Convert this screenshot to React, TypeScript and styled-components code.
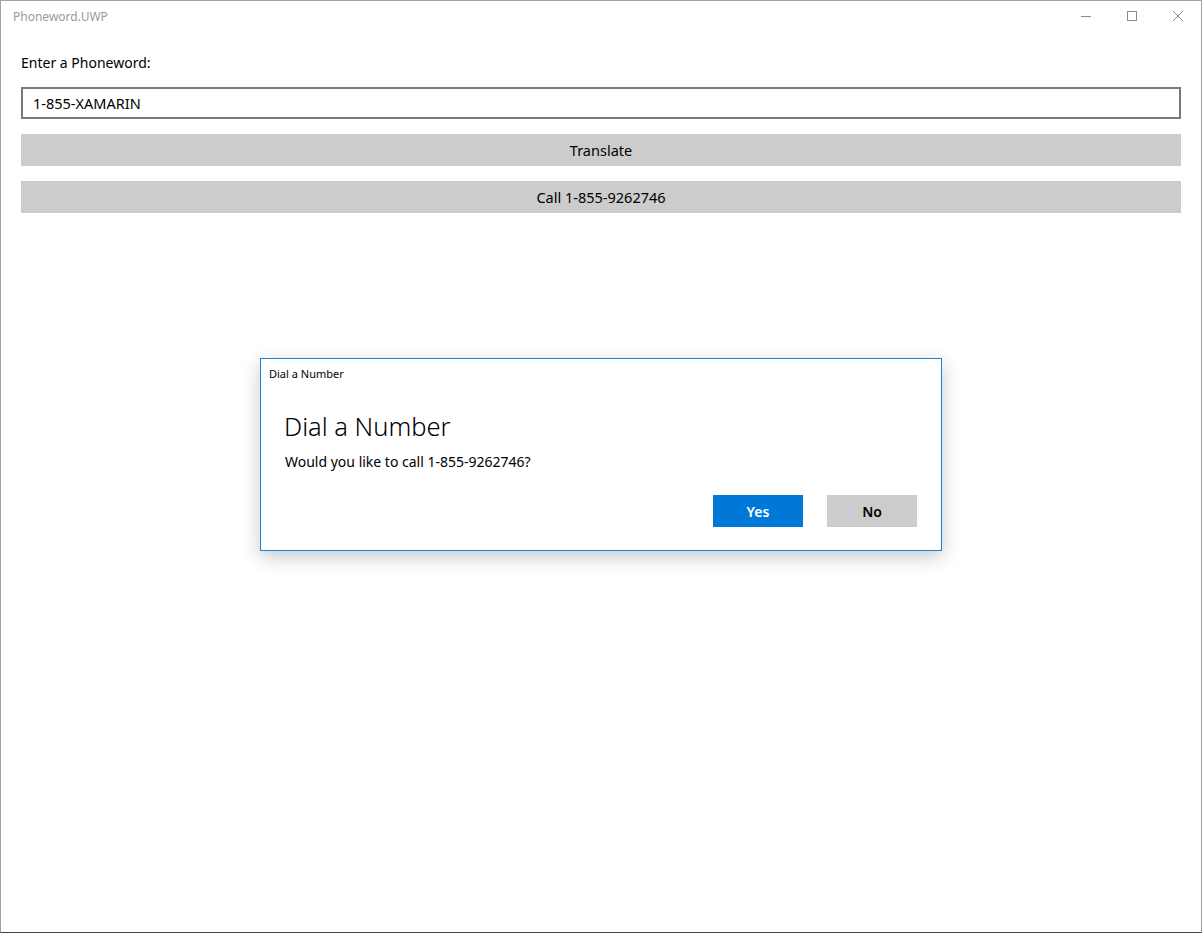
import React from 'react';
import styled, { createGlobalStyle } from 'styled-components';

const GlobalStyle = createGlobalStyle`
  html, body {
    margin: 0;
    padding: 0;
    background: #ffffff;
  }
  * {
    box-sizing: border-box;
  }
`;

const font = '"Noto Sans", "Open Sans", sans-serif';

export default function App() {
  return (
    <>
      <GlobalStyle />
      <Window>
        <TitleBar>
          <TitleText>Phoneword.UWP</TitleText>
          <CaptionButtons>
            <CaptionButton aria-label="minimize">
              <svg width="10" height="10" viewBox="0 0 10 10">
                <line x1="0" y1="5.5" x2="10" y2="5.5" stroke="#8a8a8a" strokeWidth="1" />
              </svg>
            </CaptionButton>
            <CaptionButton aria-label="maximize">
              <svg width="10" height="10" viewBox="0 0 10 10">
                <rect x="0.5" y="0.5" width="9" height="9" fill="none" stroke="#8a8a8a" strokeWidth="1" />
              </svg>
            </CaptionButton>
            <CaptionButton aria-label="close">
              <svg width="10" height="10" viewBox="0 0 10 10">
                <path d="M0 0 L10 10 M10 0 L0 10" stroke="#8a8a8a" strokeWidth="1" />
              </svg>
            </CaptionButton>
          </CaptionButtons>
        </TitleBar>

        <Content>
          <Label>Enter a Phoneword:</Label>
          <TextBox defaultValue="1-855-XAMARIN" />
          <Button>Translate</Button>
          <Button>Call 1-855-9262746</Button>
        </Content>

        <Dialog>
          <DialogTitleBar>Dial a Number</DialogTitleBar>
          <DialogBody>
            <DialogHeading>Dial a Number</DialogHeading>
            <DialogMessage>Would you like to call 1-855-9262746?</DialogMessage>
            <DialogActions>
              <DialogButton primary>Yes</DialogButton>
              <DialogButton>No</DialogButton>
            </DialogActions>
          </DialogBody>
        </Dialog>
      </Window>
    </>
  );
}

const Window = styled.div({
  position: 'relative',
  width: 1202,
  height: 933,
  background: '#ffffff',
  borderLeft: '1px solid #a3a3a3',
  borderRight: '1px solid #a3a3a3',
  borderTop: '1px solid #a3a3a3',
  borderBottom: '1px solid #3c4350',
  fontFamily: font,
  display: 'flex',
  flexDirection: 'column',
  overflow: 'hidden',
});

const TitleBar = styled.div({
  height: 31,
  display: 'flex',
  alignItems: 'center',
  paddingLeft: 12,
});

const TitleText = styled.div({
  flexGrow: 1,
  fontSize: '12px',
  color: '#9a9a9a',
  lineHeight: '16px',
});

const CaptionButtons = styled.div({
  display: 'flex',
  height: '100%',
});

const CaptionButton = styled.div({
  width: 46,
  height: '100%',
  display: 'flex',
  alignItems: 'center',
  justifyContent: 'center',
  paddingBottom: 1,
});

const Content = styled.div({
  display: 'flex',
  flexDirection: 'column',
  padding: '21px 20px 0 20px',
});

const Label = styled.div({
  fontSize: '14px',
  lineHeight: '20px',
  color: '#000000',
  marginBottom: 14,
});

const TextBox = styled.input({
  height: 32,
  border: '2px solid #7a7a7a',
  padding: '0 10px',
  fontFamily: font,
  fontSize: '14.5px',
  color: '#000000',
  outline: 'none',
  marginBottom: 15,
});

const Button = styled.div({
  height: 32,
  background: '#cccccc',
  display: 'flex',
  alignItems: 'center',
  justifyContent: 'center',
  fontSize: '14.5px',
  color: '#000000',
  marginBottom: 15,
});

const Dialog = styled.div({
  position: 'absolute',
  left: 259,
  top: 357,
  width: 682,
  height: 193,
  background: '#ffffff',
  border: '1px solid #1883d7',
  boxShadow: '0 6px 18px rgba(0, 0, 0, 0.22)',
  display: 'flex',
  flexDirection: 'column',
});

const DialogTitleBar = styled.div({
  height: 30,
  padding: '8px 0 0 8px',
  fontSize: '11px',
  lineHeight: '14px',
  color: '#000000',
});

const DialogBody = styled.div({
  display: 'flex',
  flexDirection: 'column',
  padding: '21px 24px 0 24px',
});

const DialogHeading = styled.div({
  fontSize: '25.5px',
  fontWeight: 300,
  lineHeight: '32px',
  color: '#000000',
  marginLeft: -1,
});

const DialogMessage = styled.div({
  fontSize: '14px',
  lineHeight: '20px',
  color: '#000000',
  marginTop: 10,
});

const DialogActions = styled.div({
  display: 'flex',
  justifyContent: 'flex-end',
  gap: 24,
  marginTop: 23,
});

const DialogButton = styled.div<{ primary?: boolean }>(({ primary }) => ({
  width: 90,
  height: 32,
  display: 'flex',
  alignItems: 'center',
  justifyContent: 'center',
  fontSize: '14px',
  fontWeight: 600,
  background: primary ? '#0078d7' : '#cccccc',
  color: primary ? '#ffffff' : '#000000',
}));
